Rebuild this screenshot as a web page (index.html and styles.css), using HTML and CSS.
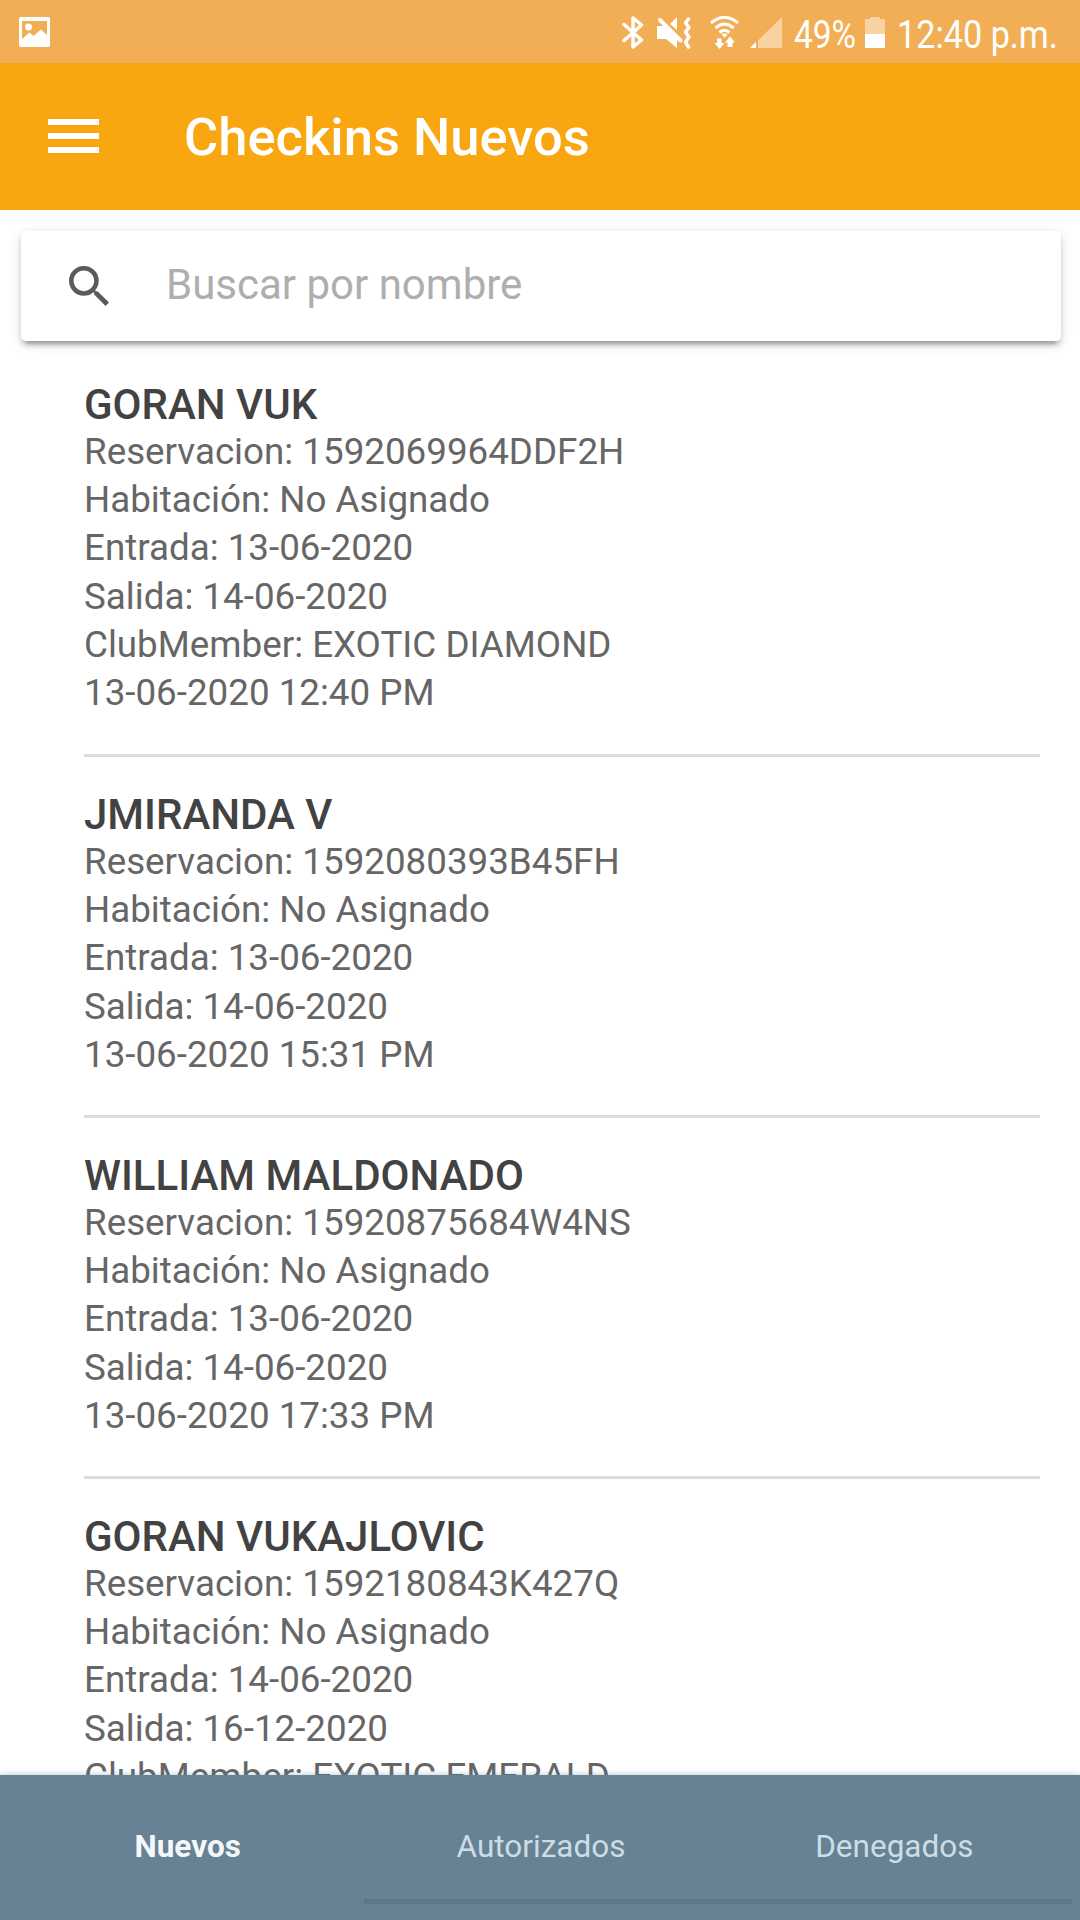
FILE: index.html
```html
<!DOCTYPE html>
<html lang="es">
<head>
    <meta charset="UTF-8">
    <meta name="viewport" content="width=device-width, initial-scale=1.0">
    <title>Checkins Nuevos</title>
    <link rel="stylesheet" href="styles.css">
</head>
<body>
    <div class="app">
        <div class="status">
            <svg class="icon-image" width="31" height="30" viewBox="0 0 31 30">
                <path fill="#fff" fill-rule="evenodd" d="M2 0H29Q31 0 31 2V28Q31 30 29 30H2Q0 30 0 28V2Q0 0 2 0ZM3 4V22L10.500 15.500L14.500 19L22 12.500L28 18V4ZM9.500 6.500A3.500 3.500 0 1 1 9.500 13.500A3.500 3.500 0 1 1 9.500 6.500Z"/>
            </svg>
            <div class="status-right">
                <svg class="icon-bt" width="22" height="33" viewBox="0 0 22 33">
                    <path fill="none" stroke="#fff" stroke-width="3.500" stroke-linejoin="round" stroke-linecap="round" d="M2 8.500L19.500 24L11 31V2L19.500 9L2 24.500"/>
                </svg>
                <svg class="icon-mute" width="35" height="32" viewBox="0 0 35 32">
                    <path fill="#fff" d="M0 9H8L20 21V31L9 22H0ZM13 7L20 0V13Z"/>
                    <path fill="none" stroke="#fff" stroke-width="4" stroke-linecap="round" d="M3 3L23.500 23.500"/>
                    <path fill="none" stroke="#fff" stroke-width="3.500" stroke-linejoin="round" stroke-linecap="round" d="M31.500 2L28.500 6L32 10.500L28.500 15L32 20L28.500 25L31.500 30"/>
                </svg>
                <svg class="icon-wifi" width="29" height="34" viewBox="0 0 29 34">
                    <g fill="none" stroke="#fff" stroke-width="3.100">
                        <path d="M1 7Q14.500 -4 28 7"/>
                        <path d="M5.500 12Q14.500 4 23.500 12"/>
                        <path d="M9.500 16.500Q14.500 12 19.500 16.500"/>
                    </g>
                    <path fill="#fff" d="M11.500 18.500Q14.500 16 17.500 18.500L14.500 22ZM7 22.500H11.500V27H14.500L9.500 33L4.500 27H7ZM17.500 31V26.500H15L20 20.500L25 26.500H22.500V31Z"/>
                </svg>
                <svg class="icon-signal" width="32" height="31" viewBox="0 0 32 31">
                    <path fill="#fff" fill-opacity=".45" d="M8 23.500L32 0V31H8Z"/>
                    <path fill="#fff" d="M0 31L6 25V31Z"/>
                </svg>
                <span class="percent">49%</span>
                <svg class="icon-battery" width="20" height="31" viewBox="0 0 20 31">
                    <path fill="#fff" fill-opacity=".45" d="M0 2H5V0H15V2H20V17H0Z"/>
                    <path fill="#fff" d="M0 17H20V31H0Z"/>
                </svg>
                <span class="clock">12:40 p.m.</span>
            </div>
        </div>

        <div class="header">
            <div class="menu"><span></span><span></span><span></span></div>
            <h1>Checkins Nuevos</h1>
        </div>

        <div class="content">
            <div class="search">
                <svg width="40" height="40" viewBox="3 3 17.490 17.490">
                    <path fill="#5b5b5b" d="M15.500 14h-.79l-.28-.27A6.471 6.471 0 0 0 16 9.500 6.500 6.500 0 1 0 9.500 16c1.610 0 3.090-.59 4.230-1.570l.27.28v.79l5 4.990L20.490 19l-4.990-5zm-6 0C7.010 14 5 11.990 5 9.500S7.010 5 9.500 5 14 7.010 14 9.500 11.990 14 9.500 14z"/>
                </svg>
                <span>Buscar por nombre</span>
            </div>
            <ul class="list">
                <li>
                    <h2>GORAN VUK</h2>
                    <p>Reservacion: 1592069964DDF2H</p>
                    <p>Habitación: No Asignado</p>
                    <p>Entrada: 13-06-2020</p>
                    <p>Salida: 14-06-2020</p>
                    <p>ClubMember: EXOTIC DIAMOND</p>
                    <p>13-06-2020 12:40 PM</p>
                </li>
                <li>
                    <h2>JMIRANDA V</h2>
                    <p>Reservacion: 1592080393B45FH</p>
                    <p>Habitación: No Asignado</p>
                    <p>Entrada: 13-06-2020</p>
                    <p>Salida: 14-06-2020</p>
                    <p>13-06-2020 15:31 PM</p>
                </li>
                <li>
                    <h2>WILLIAM MALDONADO</h2>
                    <p>Reservacion: 15920875684W4NS</p>
                    <p>Habitación: No Asignado</p>
                    <p>Entrada: 13-06-2020</p>
                    <p>Salida: 14-06-2020</p>
                    <p>13-06-2020 17:33 PM</p>
                </li>
                <li>
                    <h2>GORAN VUKAJLOVIC</h2>
                    <p>Reservacion: 1592180843K427Q</p>
                    <p>Habitación: No Asignado</p>
                    <p>Entrada: 14-06-2020</p>
                    <p>Salida: 16-12-2020</p>
                    <p>ClubMember: EXOTIC EMERALD</p>
                </li>
            </ul>
        </div>

        <div class="tabs">
            <div class="tab active">Nuevos</div>
            <div class="tab">Autorizados</div>
            <div class="tab">Denegados</div>
            <div class="indicator"></div>
        </div>
    </div>
</body>
</html>
```
FILE: styles.css
```css
* {
    padding: 0;
    margin: 0;
    box-sizing: border-box;
}

body {
    font-family: Roboto, sans-serif;
    background-color: #fff;
}

svg {
    display: block;
    flex: none;
}

.app {
    width: 1080px;
    height: 1920px;
    display: flex;
    flex-direction: column;
    overflow: hidden;
}

/* status bar */
.status {
    height: 63px;
    flex: none;
    display: flex;
    justify-content: space-between;
    padding: 16px 21px 0 19px;
    background-color: #f2ae54;
    color: #fff;
}

.icon-image {
    margin-top: 1px;
}

.status-right {
    display: flex;
    font-size: 38px;
    line-height: 38px;
    white-space: nowrap;
}

.icon-mute {
    margin: 1px 0 0 13px;
}

.icon-wifi {
    margin-left: 18px;
}

.icon-signal {
    margin: 1px 0 0 11px;
}

.percent {
    width: 62px;
    margin-left: 12px;
    transform: scaleX(.88);
    transform-origin: left;
}

.icon-battery {
    margin: 1px 0 0 9px;
}

.clock {
    width: 162px;
    margin-left: 12px;
    transform: scaleX(.9);
    transform-origin: left;
}

/* toolbar */
.header {
    height: 147px;
    flex: none;
    display: flex;
    align-items: center;
    padding-left: 48px;
    background-color: #f9a711;
}

.menu {
    width: 51px;
    display: flex;
    flex-direction: column;
    gap: 8px;
    margin-bottom: 2px;
}

.menu span {
    height: 6px;
    background-color: #fff;
}

.header h1 {
    margin-left: 85px;
    font-size: 52.5px;
    font-weight: 500;
    line-height: 62px;
    color: #fff;
}

/* list */
.content {
    flex: 1;
    min-height: 0;
    overflow: hidden;
    padding: 21px 19px 0 21px;
}

.search {
    height: 110px;
    display: flex;
    align-items: center;
    padding-left: 48px;
    border-radius: 5px;
    background-color: #fff;
    box-shadow: 0 5px 5px rgba(0, 0, 0, .14), 0 8px 3px -5px rgba(0, 0, 0, .2), 0 3px 13px rgba(0, 0, 0, .12);
}

.search span {
    margin: 0 0 3px 57px;
    font-size: 42px;
    color: #aeaeae;
}

.list {
    list-style: none;
    padding: 6px 21px 0 63px;
}

.list li {
    height: 361px;
    padding-top: 34px;
    border-bottom: 3px solid #dcdcdc;
}

.list li:first-child {
    height: 410px;
}

.list h2 {
    margin-bottom: -1px;
    font-size: 42px;
    font-weight: 500;
    line-height: 48px;
    color: #424242;
}

.list p {
    font-size: 36.75px;
    line-height: 48.2px;
    color: #666;
}

/* bottom tabs */
.tabs {
    height: 145px;
    flex: none;
    position: relative;
    display: flex;
    padding: 0 9px 0 11px;
    background-color: #668293;
    box-shadow: 0 -1px 5px rgba(80, 120, 150, .35);
}

.tab {
    flex: 1;
    text-align: center;
    font-size: 31.5px;
    line-height: 144px;
    color: #cddde6;
}

.tab.active {
    font-weight: 700;
    color: #f4f8fb;
}

.indicator {
    position: absolute;
    left: 364px;
    right: 8px;
    bottom: 16px;
    height: 5px;
    background-color: #5c7785;
}
```
